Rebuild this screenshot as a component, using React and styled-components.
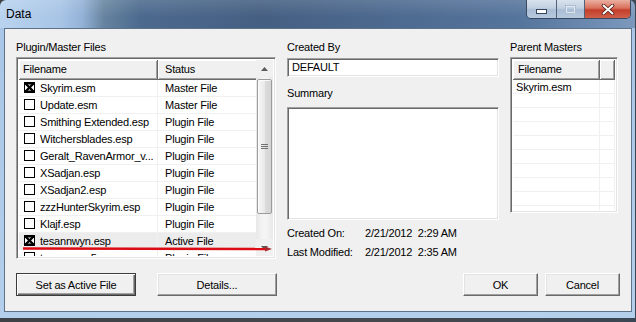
import React from "react";
import styled, { createGlobalStyle, css } from "styled-components";

const GlobalStyle = createGlobalStyle`
  html, body { margin: 0; padding: 0; }
  body {
    width: 636px; height: 322px; overflow: hidden;
    background: #3d4147;
    font-family: "Liberation Sans", Arial, sans-serif;
  }
`;

const Page = styled.div`
  width: 636px; height: 322px;
  background: linear-gradient(90deg, #3e4145 0%, #45484c 60%, #3b4654 100%);
`;

const Window = styled.div`
  width: 635px; height: 318px; box-sizing: border-box;
  display: flex; flex-direction: column;
  border-radius: 6px 6px 0 0; overflow: hidden;
  box-shadow: inset 0 0 0 1px rgba(30, 45, 70, 0.7);
`;

const TitleBar = styled.div`
  height: 28px; flex: none;
  display: flex; justify-content: space-between; align-items: flex-start;
  background:
    linear-gradient(180deg, rgba(255,255,255,0.12), rgba(255,255,255,0) 60%),
    linear-gradient(90deg, #b9d3ef 0px, #a8c5e6 60px, #93b2d7 82px, #66849f 104px, #4c6a8e 140px,
      #455f82 260px, #4d6a90 400px, #56759c 520px, #6f8db3 600px, #7c99bd 635px);
`;

const Title = styled.div`
  padding-left: 6px; line-height: 28px;
  font-size: 12px; color: #000;
`;

const Controls = styled.div`
  display: flex; height: 19px; margin-right: 4px;
  border: 1px solid #3a4960; border-top: none;
  border-radius: 0 0 5px 5px; overflow: hidden; box-sizing: border-box;
`;

const CtrlButton = styled.div`
  width: ${p => p.$w}px; height: 100%;
  display: flex; align-items: center; justify-content: center;
  box-sizing: border-box;
  & + & { border-left: 1px solid #52627a; }
  background: linear-gradient(180deg, #d9e3ee 0%, #c0cfe0 45%, #a9bdd5 55%, #b8cadf 100%);
  ${p => p.$close && css`
    background: linear-gradient(180deg, #eab0a2 0%, #d9705c 45%, #c43f2b 55%, #d0604a 100%);
  `}
`;

const Body = styled.div`
  flex: 1; display: flex;
  padding: 0 3px 6px 4px;
  background: linear-gradient(180deg, #a9c6e6 0%, #b4cfeb 100%);
`;

const Client = styled.div`
  flex: 1; box-sizing: border-box;
  background: #f0f0f0; border: 1px solid #5e728b;
  padding: 12px 11px 0 11px;
  display: flex; flex-direction: column;
  font-size: 11px; letter-spacing: -0.2px; color: #000;
`;

const MainGrid = styled.div`
  display: grid;
  grid-template-columns: 260px 212px 108px;
  column-gap: 11px;
  align-items: start;
`;

const Column = styled.div`
  display: flex; flex-direction: column;
`;

const Label = styled.div`
  height: 13px; line-height: 13px; white-space: pre;
  margin-top: ${p => p.$mt || 0}px;
`;

const sunken = css`
  box-sizing: border-box; background: #fff;
  border: 1px solid; border-color: #a0a0a0 #fff #fff #a0a0a0;
  box-shadow: inset 1px 1px #696969, inset -1px -1px #e3e3e3;
`;

const ListBox = styled.div`
  ${sunken};
  position: relative;
  height: ${p => p.$h}px;
  margin-top: 3px;
  padding: 2px;
  display: flex;
  overflow: hidden;
`;

const ListContent = styled.div`
  flex: 1; overflow: hidden;
  display: flex; flex-direction: column;
`;

const HeaderRow = styled.div`
  display: grid; grid-template-columns: ${p => p.$cols};
  height: 20px; flex: none;
`;

const HeaderCell = styled.div`
  box-sizing: border-box; background: #f0f0f0;
  border-right: 1px solid #696969; border-bottom: 1px solid #696969;
  box-shadow: inset 1px 1px #fff, inset -1px -1px #a0a0a0;
  padding-left: ${p => p.$pl}px;
  line-height: 19px; white-space: nowrap; overflow: hidden;
`;

const Row = styled.div`
  display: grid; grid-template-columns: ${p => p.$cols};
  height: ${p => p.$h}px; flex: none;
  background: ${p => (p.$hot ? "#ececec" : "#fff")};
`;

const Cell = styled.div`
  box-sizing: border-box;
  border-right: 1px solid #f0f0f0; border-bottom: 1px solid #f0f0f0;
  padding-left: ${p => p.$pl}px;
  display: flex; align-items: center; gap: 4px;
  white-space: nowrap; overflow: hidden;
`;

const ScrollBar = styled.div`
  width: 17px; flex: none;
  display: flex; flex-direction: column;
  background: #f0f0f0;
`;

const ArrowBtn = styled.div`
  height: 17px; flex: none;
  display: flex; align-items: center; justify-content: center;
`;

const Track = styled.div`
  flex: 1; padding: 2px 1px 0 1px;
  background: linear-gradient(90deg, #e8e8e8, #f4f4f4 40%, #f4f4f4 60%, #e8e8e8);
`;

const Thumb = styled.div`
  height: 135px; box-sizing: border-box;
  border: 1px solid #9c9c9c; border-radius: 2px;
  background: linear-gradient(90deg, #f6f6f6 0%, #e9e9e9 50%, #dcdcdc 51%, #d4d4d4 100%);
  box-shadow: inset 1px 1px rgba(255,255,255,0.8);
  display: flex; align-items: center; justify-content: center;
`;

const Annotation = styled.svg`
  position: absolute; left: 4px; top: 185px;
  pointer-events: none;
`;

const TextBox = styled.div`
  ${sunken};
  height: 19px; margin-top: 4px;
  padding-left: 4px; line-height: 17px;
`;

const SummaryBox = styled.div`
  ${sunken};
  height: 113px; margin-top: 7px;
`;

const InfoGrid = styled.div`
  display: grid; grid-template-columns: 78px auto;
  row-gap: 6px; margin-top: 7px;
  line-height: 13px; white-space: pre;
`;

const ButtonRow = styled.div`
  display: flex; justify-content: space-between;
  margin-top: 14px;
`;

const ButtonGroup = styled.div`
  display: flex; gap: ${p => p.$gap}px;
`;

const Btn = styled.button`
  box-sizing: border-box; height: 23px; width: ${p => p.$w}px;
  padding: 0; margin: 0;
  background: #f0f0f0; color: #000;
  font-family: "Liberation Sans", Arial, sans-serif;
  font-size: 11px; letter-spacing: -0.2px;
  border: 1px solid; border-color: #fff #696969 #696969 #fff;
  box-shadow: inset -1px -1px #a0a0a0, inset 1px 1px #e3e3e3;
  ${p => p.$default && css`
    border-color: #3c3c3c;
    box-shadow: inset 1px 1px #fff, inset -1px -1px #696969, inset -2px -2px #a0a0a0;
  `}
`;

const CheckBox = ({ checked }) => (
  <svg width="12" height="12" viewBox="0 0 12 12" style={{ flex: "none" }}>
    <rect x="0.5" y="0.5" width="10" height="10" fill="#fff" stroke="#000" strokeWidth="1" />
    {checked && (
      <g stroke="#000" fill="none">
        <path d="M0 1.3 H11 M0 9.7 H11" strokeWidth="2.2" />
        <path d="M1.5 1.5 L9.5 9.5 M9.5 1.5 L1.5 9.5" strokeWidth="2.4" />
      </g>
    )}
  </svg>
);

const files = [
  { name: "Skyrim.esm", status: "Master File", checked: true },
  { name: "Update.esm", status: "Master File" },
  { name: "Smithing Extended.esp", status: "Plugin File" },
  { name: "Witchersblades.esp", status: "Plugin File" },
  { name: "Geralt_RavenArmor_v...", status: "Plugin File" },
  { name: "XSadjan.esp", status: "Plugin File" },
  { name: "XSadjan2.esp", status: "Plugin File" },
  { name: "zzzHunterSkyrim.esp", status: "Plugin File" },
  { name: "Klajf.esp", status: "Plugin File" },
  { name: "tesannwyn.esp", status: "Active File", checked: true, hot: true },
  { name: "tesannwyn5.esp", status: "Plugin File" },
];

const masters = ["Skyrim.esm", "", "", "", "", "", "", "", "", ""];

const LEFT_COLS = "139px 100px";
const RIGHT_COLS = "87px 1fr";

export default function App() {
  return (
    <>
      <GlobalStyle />
      <Page>
        <Window>
          <TitleBar>
            <Title>Data</Title>
            <Controls>
              <CtrlButton $w={29}>
                <svg width="11" height="9" viewBox="0 0 11 9">
                  <rect x="0.5" y="4.5" width="10" height="4" fill="#fff" stroke="#33445c" />
                </svg>
              </CtrlButton>
              <CtrlButton $w={28}>
                <svg width="11" height="9" viewBox="0 0 11 9">
                  <rect x="1" y="1" width="9" height="7" fill="none" stroke="#e8eef6" strokeWidth="2" opacity="0.8" />
                  <rect x="0.5" y="0.5" width="10" height="8" fill="none" stroke="#8fa2ba" strokeWidth="0.6" />
                </svg>
              </CtrlButton>
              <CtrlButton $w={46} $close>
                <svg width="14" height="11" viewBox="0 0 14 11">
                  <path d="M2.5 1.5 L11.5 9.5 M11.5 1.5 L2.5 9.5" stroke="#4a1a12" strokeWidth="3.6" strokeLinecap="round" />
                  <path d="M2.5 1.5 L11.5 9.5 M11.5 1.5 L2.5 9.5" stroke="#fff" strokeWidth="2" strokeLinecap="round" />
                </svg>
              </CtrlButton>
            </Controls>
          </TitleBar>
          <Body>
            <Client>
              <MainGrid>
                <Column>
                  <Label>Plugin/Master Files</Label>
                  <ListBox $h={202}>
                    <ListContent>
                      <HeaderRow $cols={LEFT_COLS}>
                        <HeaderCell $pl={4}>Filename</HeaderCell>
                        <HeaderCell $pl={7}>Status</HeaderCell>
                      </HeaderRow>
                      {files.map(f => (
                        <Row key={f.name} $cols={LEFT_COLS} $h={17} $hot={f.hot}>
                          <Cell $pl={5}>
                            <CheckBox checked={f.checked} />
                            <span>{f.name}</span>
                          </Cell>
                          <Cell $pl={7}>{f.status}</Cell>
                        </Row>
                      ))}
                    </ListContent>
                    <ScrollBar>
                      <ArrowBtn>
                        <svg width="7" height="4" viewBox="0 0 7 4"><path d="M0 4 L3.5 0 L7 4 Z" fill="#5a5a5a" /></svg>
                      </ArrowBtn>
                      <Track>
                        <Thumb>
                          <svg width="7" height="7" viewBox="0 0 7 7">
                            <path d="M0 1.5 H7 M0 3.5 H7 M0 5.5 H7" stroke="#707070" strokeWidth="1" />
                          </svg>
                        </Thumb>
                      </Track>
                      <ArrowBtn>
                        <svg width="7" height="4" viewBox="0 0 7 4"><path d="M0 0 L3.5 4 L7 0 Z" fill="#5a5a5a" /></svg>
                      </ArrowBtn>
                    </ScrollBar>
                    <Annotation width="256" height="10" viewBox="0 0 256 10">
                      <path d="M2 5.5 L246 6" stroke="#dc0c14" strokeWidth="2.6" />
                      <path d="M244 3.5 L251 6 L244 8.5 Z" fill="#a8282c" />
                    </Annotation>
                  </ListBox>
                </Column>

                <Column>
                  <Label>Created By</Label>
                  <TextBox>DEFAULT</TextBox>
                  <Label $mt={10}>Summary</Label>
                  <SummaryBox />
                  <InfoGrid>
                    <span>Created On:</span>
                    <span>2/21/2012  2:29 AM</span>
                    <span>Last Modified:</span>
                    <span>2/21/2012  2:35 AM</span>
                  </InfoGrid>
                </Column>

                <Column>
                  <Label>Parent Masters</Label>
                  <ListBox $h={156}>
                    <ListContent>
                      <HeaderRow $cols={RIGHT_COLS}>
                        <HeaderCell $pl={5}>Filename</HeaderCell>
                        <HeaderCell $pl={4} />
                      </HeaderRow>
                      {masters.map((m, i) => (
                        <Row key={i} $cols={RIGHT_COLS} $h={14}>
                          <Cell $pl={3}>{m}</Cell>
                          <Cell $pl={3} />
                        </Row>
                      ))}
                    </ListContent>
                  </ListBox>
                </Column>
              </MainGrid>

              <ButtonRow>
                <ButtonGroup $gap={21}>
                  <Btn $w={120} $default>Set as Active File</Btn>
                  <Btn $w={120}>Details...</Btn>
                </ButtonGroup>
                <ButtonGroup $gap={7}>
                  <Btn $w={75}>OK</Btn>
                  <Btn $w={75}>Cancel</Btn>
                </ButtonGroup>
              </ButtonRow>
            </Client>
          </Body>
        </Window>
      </Page>
    </>
  );
}
